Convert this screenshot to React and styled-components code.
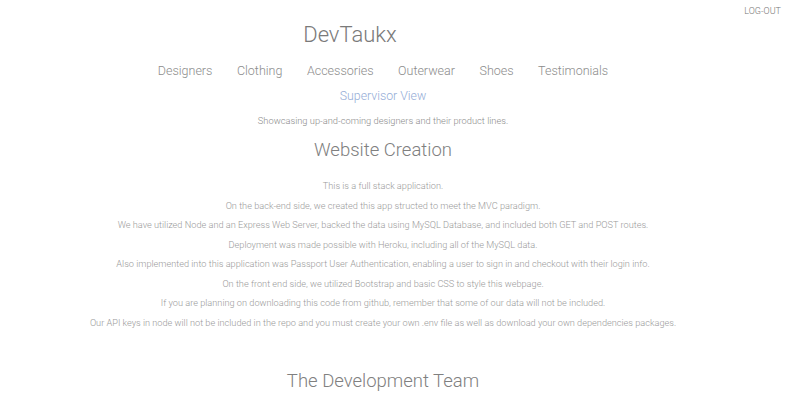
import React from 'react';
import styled, { createGlobalStyle } from 'styled-components';

const GlobalStyle = createGlobalStyle`
  body {
    margin: 0;
    background: #ffffff;
    font-family: Roboto, "Liberation Sans", sans-serif;
    font-weight: 300;
    color: #777777;
  }
`;

const navLinks = ['Designers', 'Clothing', 'Accessories', 'Outerwear', 'Shoes', 'Testimonials'];

const paragraphs = [
  'This is a full stack application.',
  'On the back-end side, we created this app structed to meet the MVC paradigm.',
  'We have utilized Node and an Express Web Server, backed the data using MySQL Database, and included both GET and POST routes.',
  'Deployment was made possible with Heroku, including all of the MySQL data.',
  'Also implemented into this application was Passport User Authentication, enabling a user to sign in and checkout with their login info.',
  'On the front end side, we utilized Bootstrap and basic CSS to style this webpage.',
  'If you are planning on downloading this code from github, remember that some of our data will not be included.',
  'Our API keys in node will not be included in the repo and you must create your own .env file as well as download your own dependencies packages.',
];

function App() {
  return (
    <Page>
      <GlobalStyle />
      <TopBar>
        <LogOut>LOG-OUT</LogOut>
      </TopBar>
      <Header>
        <Brand>DevTaukx</Brand>
        <Nav>
          {navLinks.map((link) => (
            <NavLink key={link}>{link}</NavLink>
          ))}
        </Nav>
        <Supervisor>Supervisor View</Supervisor>
      </Header>
      <Tagline>Showcasing up-and-coming designers and their product lines.</Tagline>
      <SectionTitle>Website Creation</SectionTitle>
      <About>
        {paragraphs.map((line) => (
          <AboutLine key={line}>{line}</AboutLine>
        ))}
      </About>
      <TeamTitle>The Development Team</TeamTitle>
    </Page>
  );
}

const Page = styled.div`
  display: flex;
  flex-direction: column;
  align-items: center;
  padding-right: 26px;
  text-align: center;
`;

const TopBar = styled.div`
  align-self: stretch;
  display: flex;
  justify-content: flex-end;
  padding: 6px 11px 0 0;
  margin-right: -26px;
`;

const LogOut = styled.a`
  font-size: 9px;
  color: #777777;
  text-transform: uppercase;
  cursor: pointer;
`;

const Header = styled.div`
  display: flex;
  flex-direction: column;
  align-items: center;
`;

const Brand = styled.div`
  font-size: 22px;
  color: #7a7a7a;
  margin: 6px 66px 0 0;
`;

const Nav = styled.nav`
  display: flex;
  gap: 24.5px;
  margin-top: 16px;
`;

const NavLink = styled.a`
  font-size: 12.5px;
  color: #8c8c8c;
  cursor: pointer;
`;

const Supervisor = styled.a`
  font-size: 12.3px;
  color: #94acd6;
  margin-top: 11px;
  cursor: pointer;
`;

const Tagline = styled.p`
  font-size: 9.3px;
  color: #8c8c8c;
  margin: 12px 0 0 0;
`;

const SectionTitle = styled.h2`
  font-size: 18.5px;
  font-weight: 300;
  color: #808080;
  margin: 13px 0 0 0;
`;

const About = styled.div`
  margin-top: 15px;
  display: flex;
  flex-direction: column;
`;

const AboutLine = styled.p`
  font-size: 9.2px;
  line-height: 19.5px;
  color: #9a9a9a;
  margin: 0;
`;

const TeamTitle = styled.h2`
  font-size: 18.5px;
  font-weight: 300;
  color: #808080;
  margin: 38px 0 0 0;
`;

export default App;
